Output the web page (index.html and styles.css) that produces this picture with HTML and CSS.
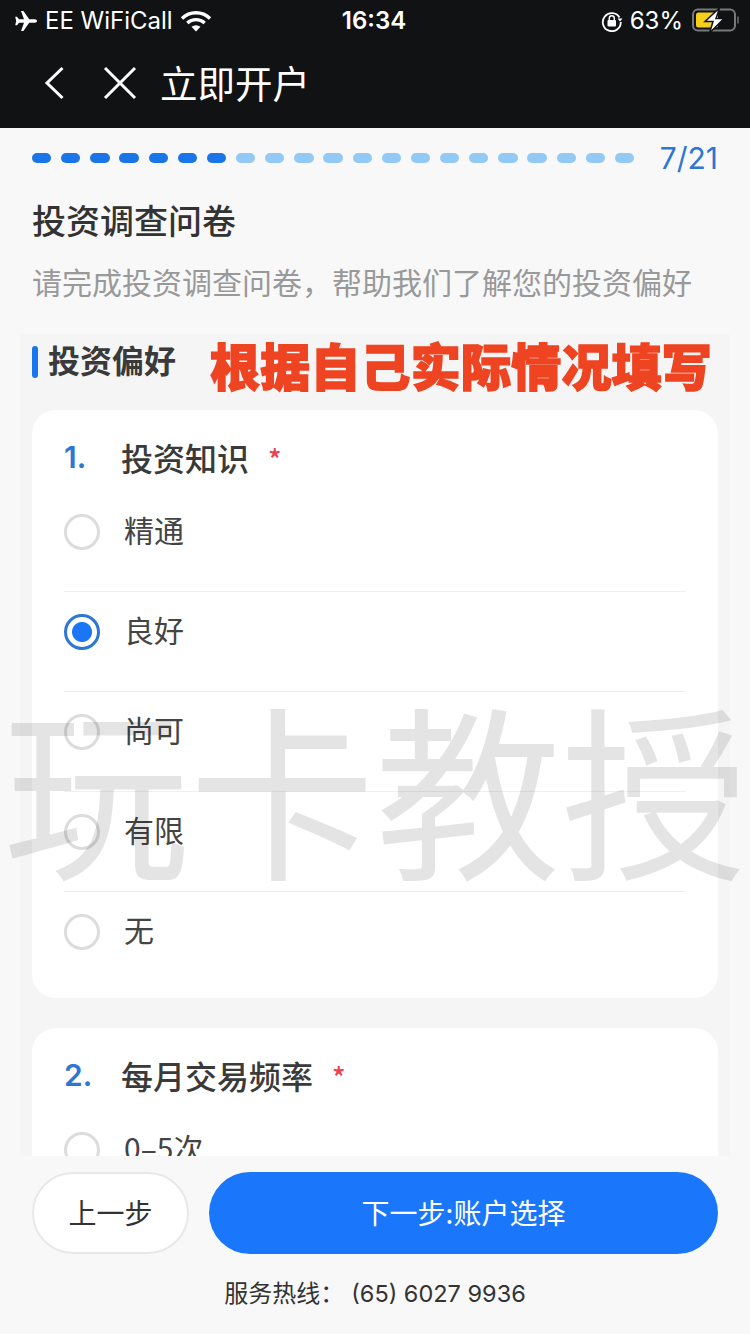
FILE: index.html
```html
<!DOCTYPE html>
<html lang="zh-CN">

<head>
    <meta charset="UTF-8" />
    <title>立即开户</title>
    <link rel="stylesheet" href="styles.css">
</head>

<body>
    <div class="app">
        <header class="top">
            <div class="status">
                <div class="status-left">
                    <svg class="ic-plane" width="24" height="22" viewBox="0 0 24 22"><path d="M23 11c0-1-1-1.700-2.300-1.700h-5.500L9.400 1H7l3 8.300H5L3 6.800H1.200l1 4.200-1 4.200H3l2-2.500h5L7 21h2.400l5.800-8.300h5.500C22 12.700 23 12 23 11z" fill="#fff"/></svg>
                    <span class="carrier">EE WiFiCall</span>
                    <svg class="ic-wifi" width="32" height="22" viewBox="0 0 32 22"><path d="M2 8.500a20 20 0 0 1 28 0" fill="none" stroke="#fff" stroke-width="3.400"/><path d="M7.300 13a13 13 0 0 1 17.400 0" fill="none" stroke="#fff" stroke-width="3.400"/><path d="M11.500 16.800a7 7 0 0 1 9 0L16 21.500z" fill="#fff"/></svg>
                </div>
                <div class="clock">16:34</div>
                <div class="status-right">
                    <svg class="ic-lock" width="22" height="22" viewBox="0 0 22 22"><path d="M18.500 7.500A9 9 0 1 0 19.800 12" fill="none" stroke="#fff" stroke-width="1.800"/><path d="M16.500 8.500h5l-2.500 3z" fill="#fff"/><rect x="6.500" y="10" width="8.500" height="6.500" rx="1" fill="#fff"/><path d="M8.300 10V8.300a2.500 2.500 0 0 1 5 0V10" fill="none" stroke="#fff" stroke-width="1.500"/></svg>
                    <span class="pct">63%</span>
                    <svg class="ic-batt" width="50" height="26" viewBox="0 0 50 26"><rect x="3" y="1.500" width="42" height="21" rx="5" fill="none" stroke="#77787a" stroke-width="2"/><rect x="6" y="4.500" width="22" height="15" rx="2.500" fill="#f6cf1b"/><path d="M48 8.500v7" stroke="#55565a" stroke-width="2"/><path d="M29.500 0 15 13.500h8L19.500 25 34 10.500h-8z" fill="#fff" stroke="#111214" stroke-width="1.500"/></svg>
                </div>
            </div>
            <nav class="nav">
                <svg class="ic-back" width="22" height="34" viewBox="0 0 22 34"><path d="M18.500 2 3 17l15.500 15" fill="none" stroke="#fff" stroke-width="3"/></svg>
                <svg class="ic-close" width="34" height="34" viewBox="0 0 34 34"><path d="M2 2l30 30M32 2 2 32" fill="none" stroke="#fff" stroke-width="3"/></svg>
                <h1 class="nav-title">立即开户</h1>
            </nav>
        </header>

        <main class="content">
            <div class="progress">
                <div class="dots" id="dots"></div>
                <span class="step">7/21</span>
            </div>
            <h2 class="page-title">投资调查问卷</h2>
            <p class="page-sub">请完成投资调查问卷，帮助我们了解您的投资偏好</p>

            <section class="panel">
                <h3 class="section-title">投资偏好</h3>

                <div class="card">
                    <div class="question"><span class="num">1.</span>投资知识<span class="req">*</span></div>
                    <div class="option"><i class="radio"></i><span class="label">精通</span></div>
                    <div class="option"><i class="radio on"></i><span class="label">良好</span></div>
                    <div class="option"><i class="radio"></i><span class="label">尚可</span></div>
                    <div class="option"><i class="radio"></i><span class="label">有限</span></div>
                    <div class="option"><i class="radio"></i><span class="label">无</span></div>
                </div>

                <div class="card">
                    <div class="question"><span class="num">2.</span>每月交易频率<span class="req">*</span></div>
                    <div class="option"><i class="radio"></i><span class="label">0–5次</span></div>
                </div>
            </section>
        </main>

        <footer class="bottom">
            <div class="buttons">
                <button class="btn-prev">上一步</button>
                <button class="btn-next">下一步:账户选择</button>
            </div>
            <p class="hotline">服务热线：<span class="phone">(65) 6027 9936</span></p>
        </footer>

        <div class="note">根据自己实际情况填写</div>
        <div class="watermark">玩卡教授</div>
    </div>

    <script>
        // 21 steps, the first 7 are done
        const dots = document.getElementById('dots');
        for (let i = 0; i < 21; i++) {
            const dot = document.createElement('span');
            dot.className = i < 7 ? 'dot done' : 'dot';
            dots.appendChild(dot);
        }
    </script>
</body>

</html>
```

FILE: styles.css
```css
* {
    box-sizing: border-box;
}

body {
    margin: 0;
    background: #f8f8f9;
    font-family: "Noto Sans CJK SC", "Noto Sans", sans-serif;
    color: #333;
}

.app {
    position: relative;
    width: 750px;
    height: 1334px;
    overflow: hidden;
    display: flex;
    flex-direction: column;
    background: #f8f8f9;
}

.top {
    height: 128px;
    flex: none;
    background: #111214;
    color: #fff;
}

.status {
    height: 42px;
    padding: 0 10px 0 14px;
    display: flex;
    align-items: center;
    justify-content: space-between;
    font-family: Inter, "Liberation Sans", sans-serif;
    font-size: 24px;
    line-height: 42px;
}

.status-left,
.status-right {
    width: 280px;
    display: flex;
    align-items: center;
}

.status-right {
    justify-content: flex-end;
}

.carrier {
    margin-left: 7px;
}

.ic-wifi {
    margin-left: 7px;
}

.clock {
    font-weight: 600;
    margin-right: 6px;
}

.pct {
    margin: 0 7px 0 7px;
}

.nav {
    height: 86px;
    padding: 0 0 4px 44px;
    display: flex;
    align-items: center;
}

.ic-close {
    margin-left: 37px;
}

.nav-title {
    margin: 0 0 2px 23px;
    font-size: 37.500px;
    font-weight: 400;
    line-height: 50px;
}

.content {
    flex: 1;
    min-height: 0;
    overflow: hidden;
}

.progress {
    height: 60px;
    padding: 0 32px;
    display: flex;
    align-items: center;
    justify-content: space-between;
}

.dots {
    display: flex;
    gap: 9.850px;
}

.dot {
    width: 19.300px;
    height: 10px;
    border-radius: 5px;
    background: #92caf5;
}

.dot.done {
    background: #1a76e8;
}

.step {
    font-family: Inter, "Liberation Sans", sans-serif;
    font-size: 30px;
    color: #2d76d2;
}

.page-title {
    margin: 9px 32px 0;
    font-size: 34px;
    font-weight: 500;
    line-height: 46px;
    color: #333;
}

.page-sub {
    margin: 16px 32px 0;
    font-size: 30px;
    line-height: 44px;
    color: #999;
    white-space: nowrap;
}

.panel {
    margin: 31px 0 0 20px;
    width: 710px;
    padding: 0 12px;
    background: #f5f5f6;
}

.section-title {
    margin: 0;
    height: 76px;
    display: flex;
    align-items: flex-start;
    padding: 3px 0 0 16px;
    position: relative;
    font-size: 32px;
    font-weight: 700;
    line-height: 44px;
    color: #3a3a3a;
}

.section-title::before {
    content: "";
    position: absolute;
    left: 0;
    top: 12px;
    width: 6px;
    height: 32px;
    border-radius: 3px;
    background: #1a76ee;
}

.card {
    background: #fff;
    border-radius: 24px;
    padding: 23px 32px 6px;
    margin-bottom: 30px;
}

.question {
    display: flex;
    align-items: center;
    height: 48px;
    margin-bottom: 11px;
    font-size: 32px;
    font-weight: 500;
    color: #3a3a3a;
}

.num {
    width: 57px;
    font-family: Inter, "Liberation Sans", sans-serif;
    font-weight: 600;
    font-size: 30px;
    color: #2d76d2;
}

.req {
    margin: 2px 0 0 19px;
    font-size: 28px;
    font-weight: 500;
    color: #e8434f;
}

.option {
    height: 100px;
    padding-bottom: 20px;
    display: flex;
    align-items: center;
    gap: 24px;
    font-size: 30px;
    color: #444;
    border-bottom: 1px solid #f0f0f0;
}

.option:last-child {
    border-bottom: 0;
}

.label {
    margin-bottom: 6px;
}

.radio {
    width: 36px;
    height: 36px;
    flex: none;
    border-radius: 50%;
    border: 3px solid #dcdcdc;
    background: #fff;
}

.radio.on {
    border-color: #2d76d2;
    background: radial-gradient(circle, #1a76f5 0 9.500px, #fff 10.500px);
}

.bottom {
    height: 178px;
    flex: none;
    background: #f8f8f9;
    padding: 16px 32px 0;
}

.buttons {
    display: flex;
    gap: 20px;
}

button {
    height: 82px;
    padding: 0 0 3px;
    border-radius: 41px;
    font-family: inherit;
    font-size: 28px;
}

.btn-prev {
    width: 157px;
    background: #fff;
    border: 2px solid #e8e8e8;
    color: #333;
}

.btn-next {
    flex: 1;
    background: #1a76fa;
    border: none;
    color: #fff;
}

.hotline {
    margin: 19px 0 0;
    text-align: center;
    font-size: 24px;
    line-height: 38px;
    color: #333;
}

.phone {
    margin-left: 7px;
    font-family: Inter, "Liberation Sans", sans-serif;
    font-size: 23.500px;
}

.note {
    position: absolute;
    left: 210px;
    top: 328px;
    font-size: 50px;
    line-height: 72px;
    font-weight: 900;
    letter-spacing: 0.200px;
    color: #ee4422;
    -webkit-text-stroke: 1.500px #ee4422;
    white-space: nowrap;
}

.watermark {
    position: absolute;
    left: 3px;
    top: 665px;
    font-size: 186px;
    line-height: 240px;
    color: rgba(0, 0, 0, 0.105);
    white-space: nowrap;
    pointer-events: none;
}
```
